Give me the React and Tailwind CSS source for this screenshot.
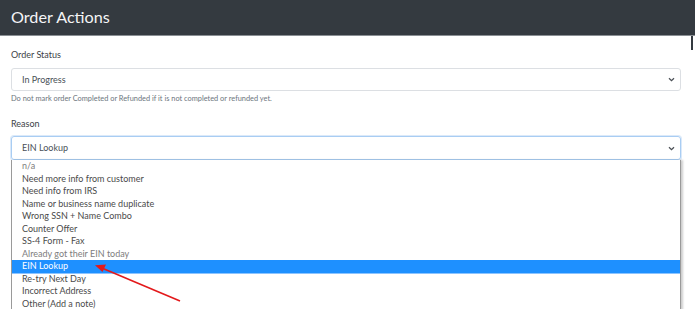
import React from "react";

const items = [
  { t: "n/a", muted: true },
  { t: "Need more info from customer" },
  { t: "Need info from IRS" },
  { t: "Name or business name duplicate" },
  { t: "Wrong SSN + Name Combo" },
  { t: "Counter Offer" },
  { t: "SS-4 Form - Fax" },
  { t: "Already got their EIN today", muted: true },
  { t: "EIN Lookup", active: true },
  { t: "Re-try Next Day" },
  { t: "Incorrect Address" },
  { t: "Other (Add a note)" },
];

function Chevron() {
  return (
    <svg width="7" height="5" viewBox="0 0 7 5" className="shrink-0 mr-[5px]">
      <path d="M1 1.2 L3.5 3.6 L6 1.2" fill="none" stroke="#4a4f55" strokeWidth="1.3" />
    </svg>
  );
}

export default function App() {
  return (
    <div className="relative w-[695px] h-[309px] overflow-hidden bg-white" style={{ fontFamily: "Lato, 'Open Sans', sans-serif" }}>
      <div className="h-[36px] w-full bg-[#343a40] border-b border-[#8a8f94] flex items-center pl-[11px]">
        <span className="text-[16.2px] text-[#f4f5f6] leading-none">Order Actions</span>
      </div>
      <div className="absolute right-[2px] top-[36px] w-[2px] h-[14px] bg-[#343a40]"></div>
      <div className="pl-[11px] w-[681px] flex flex-col">
        <div className="pt-[13px] text-[9px] leading-[12px] text-[#3d4247]">Order Status</div>
        <div className="mt-[7px] h-[23px] border border-[#dcdfe3] rounded-[3px] flex items-center justify-between pl-[10px] text-[9px] text-[#495057]">
          <span>In Progress</span>
          <Chevron />
        </div>
        <div className="mt-[3px] text-[7.4px] leading-[10px] text-[#6c757d]">
          Do not mark order Completed or Refunded if it is not completed or refunded yet.
        </div>
        <div className="mt-[14px] text-[9px] leading-[12px] text-[#3d4247]">Reason</div>
        <div className="mt-[6px] h-[24px] border border-[#a9cdf3] rounded-[3px] shadow-[0_0_0_1px_#dbe9f9] flex items-center justify-between pl-[10px] text-[9px] text-[#495057]">
          <span>EIN Lookup</span>
          <Chevron />
        </div>
        <div className="w-[670px] bg-white border-l border-r border-[#9a9a9a] shadow-[2px_0_2px_rgba(0,0,0,0.2)] flex flex-col">
          {items.map((it) => (
            <div
              key={it.t}
              className={
                it.active
                  ? "h-[12.5px] leading-[12.5px] pl-[10px] text-[9px] text-white bg-[#1e90ff] border-b border-[#8cc4ff] box-content -mb-px"
                  : it.muted
                  ? "h-[12.5px] leading-[12.5px] pl-[10px] text-[9px] text-[#7d7d7d]"
                  : "h-[12.5px] leading-[12.5px] pl-[10px] text-[9px] text-[#4a4a4a]"
              }
            >
              {it.t}
            </div>
          ))}
        </div>
      </div>
      <svg className="absolute left-0 top-0 pointer-events-none" width="695" height="309">
        <line x1="180" y1="301" x2="103" y2="268.5" stroke="#e3191b" strokeWidth="1.6" />
        <polygon points="95,265.2 106,264.6 102.5,272" fill="#e3191b" />
      </svg>
    </div>
  );
}
